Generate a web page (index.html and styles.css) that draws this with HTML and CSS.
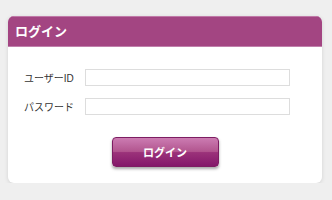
FILE: index.html
```html
<!DOCTYPE html>
<html lang="ja">
<head>
  <meta charset="UTF-8" />
  <title>ログイン</title>
  <link rel="stylesheet" href="styles.css">
</head>
<body>
  <div class="box">
    <div class="box-head">ログイン</div>
    <div class="box-body">
      <div class="row">
        <label for="uid">ユーザーID</label>
        <input id="uid" type="text">
      </div>
      <div class="row">
        <label for="pw">パスワード</label>
        <input id="pw" type="password">
      </div>
      <div class="actions">
        <button type="button">ログイン</button>
      </div>
    </div>
  </div>
</body>
</html>
```

FILE: styles.css
```css
body {
  margin: 0;
  padding: 16px 10px 0 8px;
  background-color: #efefef;
  font-family: "Liberation Sans", "Noto Sans CJK JP", sans-serif;
}

.box {
  background-color: white;
  border-radius: 6px;
  box-shadow: 0 1px 4px rgba(0, 0, 0, 0.12);
  overflow: hidden;
  height: 167px;
}

.box-head {
  background-color: #a34582;
  border-top: 1px solid #c07aa8;
  border-bottom: 1px solid #c080ac;
  color: white;
  font-weight: bold;
  font-size: 13px;
  height: 29px;
  line-height: 29px;
  padding-left: 7px;
}

.box-body {
  padding-top: 22px;
}

.row {
  display: flex;
  align-items: center;
  margin-bottom: 12px;
  padding-left: 16px;
}

.row label {
  width: 61px;
  font-size: 10px;
  color: #333;
}

.row input {
  width: 205px;
  height: 17px;
  box-sizing: border-box;
  border: 1px solid #ddd;
  margin: 0;
  padding: 0 3px;
}

.actions {
  display: flex;
  justify-content: center;
  padding-top: 10px;
}

.actions button {
  width: 107px;
  height: 30px;
  border: 1px solid #7d1d62;
  border-radius: 4px;
  background: linear-gradient(#cc7cb2 0%, #b2558f 48%, #9b327a 52%, #84186a 100%);
  box-shadow: 0 2px 3px rgba(0, 0, 0, 0.35);
  color: white;
  font-weight: bold;
  font-size: 11px;
  font-family: "Liberation Sans", "Noto Sans CJK JP", sans-serif;
}
```
